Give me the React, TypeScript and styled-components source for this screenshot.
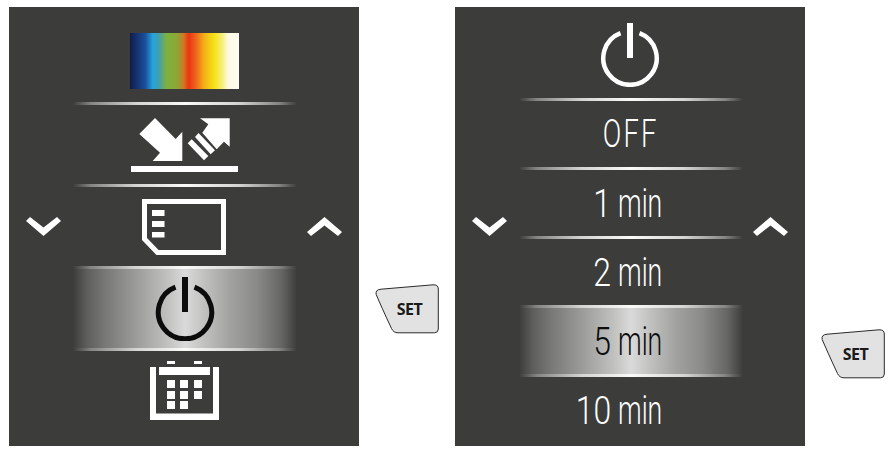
import styled, { createGlobalStyle } from "styled-components";

const GlobalStyle = createGlobalStyle`
  html, body {
    margin: 0;
    padding: 0;
    background: #fff;
  }
`;

function PowerIcon({ weight = 5 }: { weight?: number }) {
  return (
    <svg width="60" height="64" viewBox="0 0 60 64" fill="none" stroke="currentColor">
      <path d="M20.5 10.2 A26.7 26.7 0 1 0 39.5 10.2" strokeWidth={weight} />
      <path d="M30 0 V35" strokeWidth={6} />
    </svg>
  );
}

function TransferIcon() {
  return (
    <svg width="108" height="54" viewBox="131 117 108 54" fill="#fff">
      <polygon points="139.3,133 155,117 175.7,138 182.3,130.7 182.3,160 152.7,160 160,151.7" />
      <polygon points="200,117.3 229.7,117.3 229.7,145.7 224,140.7 216.7,148.3 202.3,131.7 208.3,123.3" />
      <polygon points="195,136 198.5,132 215,149.3 210.7,153.3" />
      <polygon points="187.7,142.3 191.7,138.3 208.3,155 204,159.3" />
      <rect x="131" y="165" width="107" height="6" />
    </svg>
  );
}

function CardIcon() {
  return (
    <CardSvg width="84" height="56" viewBox="0 0 84 56" fill="none">
      <path d="M2.5 2.5 H81.5 V53.5 H15.5 L2.5 40 Z" stroke="#fff" strokeWidth="5" />
      <rect x="10" y="11" width="12.5" height="6" fill="#fff" />
      <rect x="10" y="22" width="12.5" height="6" fill="#fff" />
      <rect x="10" y="33" width="12.5" height="5.5" fill="#fff" />
    </CardSvg>
  );
}

function CalendarIcon() {
  const cells = [
    [17, 19], [30, 19], [44, 19],
    [17, 30], [30, 30], [44, 30],
    [17, 40], [30, 40],
  ];
  return (
    <svg width="69" height="59" viewBox="0 0 69 59" fill="#fff">
      <rect x="17" y="0" width="8" height="3" />
      <rect x="44" y="0" width="8" height="3" />
      <path d="M0 6 H6 V52.5 H63 V6 H69 V59 H0 Z" />
      <rect x="9" y="6" width="51" height="8" />
      {cells.map(([x, y]) => (
        <rect key={`${x}-${y}`} x={x} y={y} width="8" height="8" />
      ))}
    </svg>
  );
}

function Key() {
  return (
    <KeyShape width="64" height="50" viewBox="0 0 64 50">
      <path
        d="M6 5.2 L58 0.8 Q63.3 0.6 63.3 5 V45 Q63.3 48.8 59.5 48.8 H23 Q18.5 48.8 16.5 44.5 Q6 22 1.2 10.5 Q0 5.8 6 5.2 Z"
        fill="#e2e2e2"
        stroke="#2a2a2a"
        strokeWidth="1"
      />
      <KeyLabel x="34.5" y="30.5" textAnchor="middle">SET</KeyLabel>
    </KeyShape>
  );
}

const minuteRows = [
  { value: "1", active: false },
  { value: "2", active: false },
  { value: "5", active: true },
  { value: "10", active: false },
];

export default function App() {
  return (
    <>
      <GlobalStyle />
      <Page>
        <Panel>
          <Chevron />
          <List>
            <Row $height={95}>
              <Spectrum />
            </Row>
            <Divider />
            <Row>
              <TransferIcon />
            </Row>
            <Divider />
            <Row>
              <CardIcon />
            </Row>
            <Divider />
            <Row $active>
              <PowerIcon />
            </Row>
            <Divider />
            <Row>
              <CalendarIcon />
            </Row>
          </List>
          <Chevron $up />
        </Panel>
        <KeySlot $top={277}>
          <Key />
        </KeySlot>
        <Panel>
          <Chevron />
          <List $shift={2}>
            <Row $height={91}>
              <PowerSlot>
                <PowerIcon weight={4.5} />
              </PowerSlot>
            </Row>
            <Divider />
            <Row $height={66}>
              <OffLabel>OFF</OffLabel>
            </Row>
            <Divider />
            {minuteRows.map((row, i) => (
              <div key={row.value}>
                <Row $height={66} $active={row.active}>
                  <Minutes>
                    <Value>{row.value}</Value>
                    <Unit>min</Unit>
                  </Minutes>
                </Row>
                {i < minuteRows.length - 1 && <Divider />}
              </div>
            ))}
          </List>
          <Chevron $up />
        </Panel>
        <KeySlot $top={322}>
          <Key />
        </KeySlot>
      </Page>
    </>
  );
}

function Chevron({ $up }: { $up?: boolean }) {
  return (
    <ChevronSvg $up={$up} width="35" height="19" viewBox="0 0 35 19" fill="#fff">
      <polygon points="0,4 4,0 17.5,10.5 31,0 35,4 17.5,19" />
    </ChevronSvg>
  );
}

const Page = styled.div`
  width: 896px;
  height: 459px;
  box-sizing: border-box;
  padding: 7px 0 0 9px;
  display: flex;
  align-items: flex-start;
  gap: 16px;
  overflow: hidden;
`;

const Panel = styled.section`
  width: 350px;
  height: 439px;
  flex: none;
  box-sizing: border-box;
  padding: 0 17px;
  background: #3c3c3a;
  display: flex;
  justify-content: space-between;
  align-items: flex-start;
`;

const ChevronSvg = styled.svg<{ $up?: boolean }>`
  flex: none;
  align-self: center;
  transform: ${(p) => (p.$up ? "rotate(180deg)" : "none")};
`;

const CardSvg = styled.svg`
  margin-right: 2px;
`;

const List = styled.div<{ $shift?: number }>`
  width: 224px;
  flex: none;
  margin-left: ${(p) => p.$shift ?? 1}px;
`;

const Row = styled.div<{ $height?: number; $active?: boolean }>`
  height: ${(p) => p.$height ?? 79}px;
  display: flex;
  align-items: center;
  justify-content: center;
  color: ${(p) => (p.$active ? "#0c0c0c" : "#fff")};
  background: ${(p) =>
    p.$active
      ? "linear-gradient(90deg, #3c3c3a 0%, #5d5d5b 6%, #777775 14%, #9b9b99 28%, #c0c0be 42%, #dadada 50%, #bdbdbb 60%, #a2a2a0 70%, #8a8a88 82%, #666664 93%, #3c3c3a 100%)"
      : "none"};
`;

const Divider = styled.div`
  height: 3px;
  background: linear-gradient(90deg, #3c3c3a 0%, #858583 8%, #d4d4d2 28%, #fafaf8 50%, #d4d4d2 74%, #858583 92%, #3c3c3a 100%);
`;

const Spectrum = styled.div`
  width: 109px;
  height: 56px;
  margin-top: 13px;
  background: linear-gradient(
    90deg,
    #101c4a 0%,
    #1b4f9c 14%,
    #25a5de 21%,
    #3f9fb0 26%,
    #7fb23a 34%,
    #8aa838 43%,
    #d07a22 49%,
    #ec3414 54%,
    #ee6a1c 61%,
    #f2b018 68%,
    #f6e014 77%,
    #f6ee70 84%,
    #fdf9e4 90%,
    #fffdf2 100%
  );
`;

const PowerSlot = styled.div`
  margin: 5px 3px 0 0;
  display: flex;
`;

const textStyle = `
  font-family: Roboto, "Liberation Sans", sans-serif;
  font-weight: 300;
  font-size: 38px;
  line-height: 1;
  white-space: nowrap;
`;

const OffLabel = styled.div`
  ${textStyle}
  letter-spacing: 3px;
  transform: scaleX(0.72);
`;

const Minutes = styled.div`
  width: 100%;
  box-sizing: border-box;
  padding-right: 80px;
  display: flex;
  justify-content: flex-end;
  align-items: baseline;
`;

const Value = styled.span`
  ${textStyle}
  margin-right: 7px;
  transform: scaleX(0.84);
  transform-origin: 100% 50%;
`;

const Unit = styled.span`
  ${textStyle}
  font-size: 41px;
  width: 45px;
  transform: scaleX(0.65);
  transform-origin: 0 50%;
`;

const KeySlot = styled.div<{ $top: number }>`
  flex: none;
  width: 64px;
  margin-top: ${(p) => p.$top}px;
`;

const KeyShape = styled.svg`
  display: block;
`;

const KeyLabel = styled.text`
  font-family: "Open Sans", "Liberation Sans", sans-serif;
  font-weight: 700;
  font-size: 16px;
  letter-spacing: -0.5px;
  fill: #1a1a1a;
`;
